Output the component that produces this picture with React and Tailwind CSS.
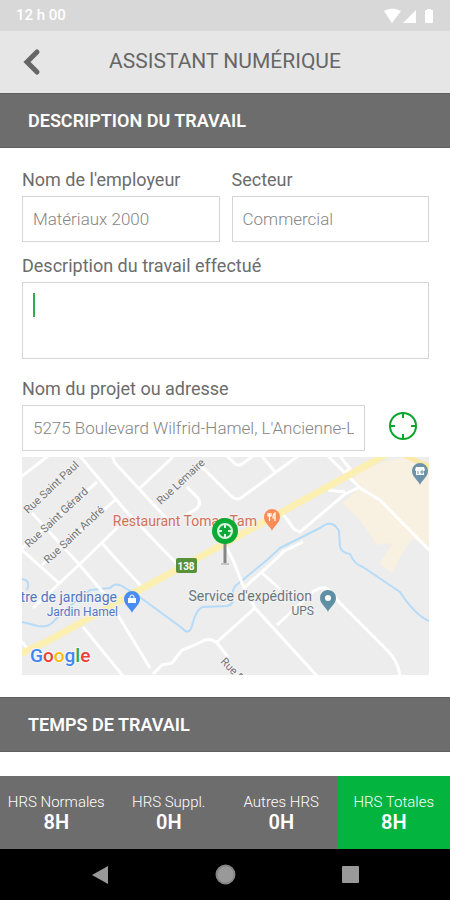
import React, { useState } from 'react';

const totals = [
  { label: 'HRS Normales', value: '8H' },
  { label: 'HRS Suppl.', value: '0H' },
  { label: 'Autres HRS', value: '0H' },
  { label: 'HRS Totales', value: '8H', active: true },
];

const roads = [
  'M58 -1 L103 53 L156 108',
  'M90 -1 L93 6 L145 62',
  'M151 0 L118 31',
  'M176 6 L208 38 Q214 44 219 41 L276 -1',
  'M205 -1 L213 7 Q216 9 220 7 L231 -1',
  'M240 -1 L253 15',
  'M165 30 L176 41 Q180 47 174 52 L161 60',
  'M26 -1 L-1 20',
  'M75 25 L-1 92',
  'M93 43 L20 108',
  'M96 70 L60 105 L11 151',
  'M10 56 L56 106 L85 140 L128 211',
  'M80 86 L93 101 L121 131',
  'M-1 92 L38 127',
  'M61 170 L101 219',
  'M-1 184 L13 200',
  'M131 217 L140 208 L150 206 L160 193 L168 190 L183 183 Q190 181 195 186 L206 200',
  'M195 185 L233 151',
  'M203 88 L211 103 L222 131 L233 151 L295 219',
  'M223 130 L253 103 L262 94 L281 85',
  'M240 116 L258 132',
  'M255 168 L292 134 Q300 129 306 132 L318 146 L366 194 Q376 204 378 219',
  'M260 56 L272 72 L278 75 L323 37 L338 30',
  'M306 -1 L338 31 L358 43 L407 93',
  'M318 -1 L328 12 L322 16',
  'M306 33 L323 35',
];

const streets = [
  { name: 'Rue Saint Paul', x: 6, y: 57, angle: -43 },
  { name: 'Rue Saint Gérard', x: 7, y: 91, angle: -43 },
  { name: 'Rue Saint André', x: 26, y: 107, angle: -43 },
  { name: 'Rue Lemaire', x: 139, y: 48, angle: -43 },
  { name: 'Rue Duberger', x: 198, y: 205, angle: 46 },
];

const Pin = ({ x, y, fill, children }) => (
  <g transform={`translate(${x} ${y})`}>
    <path d="M0 14 C-1 10 -8 6 -8 0 A8 8 0 1 1 8 0 C8 6 1 10 0 14 Z" fill={fill} />
    {children}
  </g>
);

const Target = ({ className }) => (
  <svg className={className} viewBox="0 0 28 28" fill="none" stroke="#0aa52c" strokeWidth="2" aria-hidden="true">
    <circle cx="14" cy="14" r="13" />
    <path d="M14 1v5M14 22v5M1 14h5M22 14h5" />
  </svg>
);

const Map = () => (
  <svg
    className="block h-[218px] w-full bg-[#ededed] font-[Roboto,sans-serif]"
    viewBox="0 0 407 218"
    preserveAspectRatio="xMidYMid slice"
    role="img"
    aria-label="Carte"
  >
    <path
      d="M341 13 L365 4 L385 0 L407 14 V90 L390 82 L380 97 L370 116 L357 106 L371 86 L355 88 L337 62 L320 46 L338 30 L330 22 Z"
      fill="#f8f0e0"
    />
    {/* River */}
    <g fill="none" stroke="#b5dbf8" strokeWidth="2" strokeLinejoin="round">
      <path d="M0 165 L16 169 Q27 171 33 163 L48 149 L68 133 L88 131 Q94 124 103 131 L115 138 L160 171 Q167 179 170 169 Q174 152 181 150 L205 149 Q212 148 211 140 Q209 131 217 126 L245 103 L258 91 L298 71 Q310 61 317 74 L318 90 Q320 96 328 97 Q332 107 341 110 L378 135 Q393 158 407 164" />
      <path d="M0 122 Q9 123 5 133" />
    </g>
    <g fill="none" stroke="#fff" strokeWidth="3" strokeLinejoin="round">
      {roads.map((d) => (
        <path key={d} d={d} />
      ))}
    </g>
    <path d="M-2 197 L26 184 L121 131 L198 89 L258 56 L365 -3" fill="none" stroke="#fbefb1" strokeWidth="7" />
    <path d="M380 -3 L408 10" fill="none" stroke="#fbe9a8" strokeWidth="5" />

    <g fill="#757575" stroke="#f3f3f3" strokeWidth="2" paintOrder="stroke" fontSize="11">
      {streets.map((s) => (
        <text key={s.name} transform={`translate(${s.x} ${s.y}) rotate(${s.angle})`}>
          {s.name}
        </text>
      ))}
    </g>

    <g stroke="#f3f3f3" strokeWidth="2" paintOrder="stroke" textAnchor="end">
      <text x="235" y="69" fontSize="14" fill="#d2705a">Restaurant Tomas Tam</text>
      <text x="95" y="145" fontSize="14" fill="#5277c3">Centre de jardinage</text>
      <text x="96" y="159" fontSize="12" fill="#5277c3">Jardin Hamel</text>
      <text x="290" y="144" fontSize="14" fill="#6b757b">Service d'expédition</text>
      <text x="292" y="158" fontSize="12" fill="#6b757b">UPS</text>
    </g>

    {/* Route number */}
    <rect x="154" y="101" width="21" height="15" rx="2" fill="#58913a" />
    <text x="164" y="113" fontSize="10" fontWeight="700" fill="#fff" textAnchor="middle">138</text>

    <Pin x={250} y={60} fill="#f98d5a">
      <path d="M-4 -4v3h3v-3M-2.5 -4v8M3 4v-8q-2 1-2 5h2" stroke="#fff" strokeWidth="1.2" fill="none" />
    </Pin>
    <Pin x={110} y={142} fill="#4a8df0">
      <path d="M-4 -1h8v5h-8z" fill="#fff" />
      <path d="M-2 -1v-1a2 2 0 0 1 4 0v1" stroke="#fff" strokeWidth="1" fill="none" />
    </Pin>
    <Pin x={306} y={141} fill="#5f8fa3">
      <circle r="3" fill="#fff" />
    </Pin>
    <Pin x={398} y={14} fill="#6c93aa">
      <path d="M-5 -1L-4 -4h8L5 -1L4 0v4h-8v-4z" fill="#fff" />
      <path d="M-2 3v-3M1 0h2v2h-2z" stroke="#6c93aa" strokeWidth="1" fill="none" />
    </Pin>

    {/* Current position */}
    <path d="M203 84 V107" stroke="#858585" strokeWidth="3" />
    <path d="M199 107 H207" stroke="#c4c4c4" strokeWidth="2" />
    <circle cx="203" cy="74" r="13" fill="#0aaa35" />
    <g fill="none" stroke="#d9f5df" strokeWidth="2">
      <circle cx="203" cy="74" r="7" />
      <path d="M203 67v4M203 77v4M196 74h4M206 74h4" />
    </g>

    <text x="8" y="205" fontSize="19" fontWeight="500" stroke="#f7f7f7" strokeWidth="2" paintOrder="stroke">
      <tspan fill="#4285f4">G</tspan>
      <tspan fill="#ea4335">o</tspan>
      <tspan fill="#fbbc05">o</tspan>
      <tspan fill="#4285f4">g</tspan>
      <tspan fill="#34a853">l</tspan>
      <tspan fill="#ea4335">e</tspan>
    </text>
  </svg>
);

const SectionTitle = ({ children }) => (
  <h2 className="border-y border-[#5f5f5f] bg-[#6d6d6d] px-7 py-3 text-lg leading-[29px] font-semibold text-white">
    {children}
  </h2>
);

const fieldClass =
  'h-[46px] w-full min-w-0 border border-[#d5d5d5] bg-white px-[10px] text-[17px] font-light text-[#858585] outline-none';
const labelClass = 'block pb-1 text-lg leading-6 text-[#6c6c6c]';

const App = () => {
  const [employer, setEmployer] = useState('Matériaux 2000');
  const [sector, setSector] = useState('Commercial');
  const [description, setDescription] = useState('');
  const [address, setAddress] = useState("5275 Boulevard Wilfrid-Hamel, L'Ancienne-Lorette");

  return (
    <div className="flex h-screen flex-col bg-white font-[Roboto,sans-serif]">
      {/* Status bar */}
      <div className="flex h-[31px] shrink-0 items-center justify-between bg-[#d8d8d8] px-4 text-white">
        <span className="text-[15px] font-medium">12 h 00</span>
        <svg className="h-4 w-[50px]" viewBox="0 0 50 16" fill="currentColor" aria-hidden="true">
          <path d="M0 3 Q8 -2 17 3 L8 15 Z" />
          <path d="M32 2 V15 H19 Z" />
          <path d="M43 1h4v1h1q1 0 1 1v11q0 1-1 1h-6q-1 0-1-1V3q0-1 1-1h1z" />
        </svg>
      </div>

      <header className="grid h-[62px] shrink-0 grid-cols-[64px_1fr_64px] items-center bg-[#e6e6e6]">
        <button type="button" aria-label="Retour" className="flex h-full items-center justify-center text-[#666]">
          <svg className="h-7 w-5" viewBox="0 0 20 28" fill="none" stroke="currentColor" strokeWidth="5" aria-hidden="true">
            <path d="M15 4 L5 14 L15 24" strokeLinecap="round" />
          </svg>
        </button>
        <h1 className="text-center text-[21px] text-[#666]">ASSISTANT NUMÉRIQUE</h1>
      </header>

      <main className="min-h-0 flex-1 overflow-hidden">
        <SectionTitle>DESCRIPTION DU TRAVAIL</SectionTitle>

        <form className="pt-5 pr-[21px] pb-[22px] pl-[22px]">
          <div className="grid grid-cols-2 gap-3">
            <div>
              <label htmlFor="employer" className={labelClass}>Nom de l'employeur</label>
              <input id="employer" className={fieldClass} value={employer} onChange={(e) => setEmployer(e.target.value)} />
            </div>
            <div>
              <label htmlFor="sector" className={labelClass}>Secteur</label>
              <input id="sector" className={fieldClass} value={sector} onChange={(e) => setSector(e.target.value)} />
            </div>
          </div>

          <div className="relative pt-3">
            <label htmlFor="description" className={labelClass}>Description du travail effectué</label>
            <textarea
              id="description"
              className="block h-[77px] w-full resize-none border border-[#d5d5d5] p-[10px] text-[17px] font-light text-[#858585] caret-transparent outline-none"
              value={description}
              onChange={(e) => setDescription(e.target.value)}
            />
            {!description && <span className="absolute bottom-[42px] left-[11px] h-6 w-[2px] bg-[#2fae50]" />}
          </div>

          <div className="pt-[18px]">
            <label htmlFor="address" className={labelClass}>Nom du projet ou adresse</label>
            <div className="flex items-center">
              <input id="address" className={fieldClass} value={address} onChange={(e) => setAddress(e.target.value)} />
              <button type="button" aria-label="Me localiser" className="flex w-16 shrink-0 justify-end pr-3 pb-1">
                <Target className="h-7 w-7" />
              </button>
            </div>
          </div>

          <div className="pt-[6px]">
            <Map />
          </div>
        </form>

        <SectionTitle>TEMPS DE TRAVAIL</SectionTitle>
      </main>

      <footer className="grid h-[73px] shrink-0 grid-cols-4 text-center text-white">
        {totals.map((t) => (
          <div key={t.label} className={t.active ? 'bg-[#03b43f] pt-4' : 'bg-[#6d6d6d] pt-4'}>
            <p className="text-[15px] leading-5 font-light">{t.label}</p>
            <p className="text-xl leading-5 font-semibold">{t.value}</p>
          </div>
        ))}
      </footer>

      <nav className="grid h-[51px] shrink-0 grid-cols-[1fr_50px_1fr] items-center bg-black text-[#999]">
        <button type="button" aria-label="Précédent" className="flex justify-center">
          <svg className="h-[18px] w-4" viewBox="0 0 16 18" fill="currentColor" aria-hidden="true">
            <path d="M16 0 V18 L0 9 Z" />
          </svg>
        </button>
        <button type="button" aria-label="Accueil" className="flex justify-center">
          <svg className="h-[21px] w-[21px]" viewBox="0 0 21 21" aria-hidden="true">
            <circle cx="10.5" cy="10.5" r="9" fill="currentColor" />
            <circle cx="10.5" cy="10.5" r="9" fill="none" stroke="#858585" strokeWidth="2" />
          </svg>
        </button>
        <button type="button" aria-label="Applications récentes" className="flex justify-center">
          <svg className="h-[17px] w-[17px]" viewBox="0 0 17 17" fill="currentColor" aria-hidden="true">
            <rect width="17" height="17" rx="1" />
          </svg>
        </button>
      </nav>
    </div>
  );
};

export default App;
